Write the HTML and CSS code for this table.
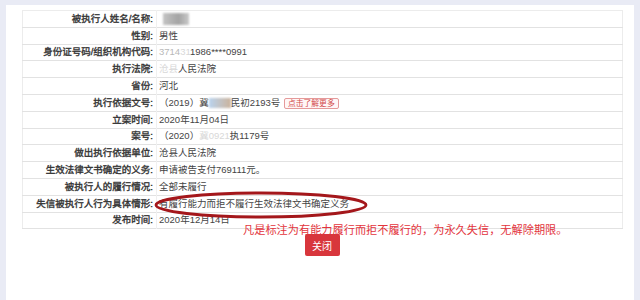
FILE: index.html
```html
<!DOCTYPE html>
<html lang="zh">
<head>
<meta charset="utf-8">
<link rel="stylesheet" href="styles.css">
</head>
<body>
<div class="panel">
  <table class="info">
    <tr><td class="label">被执行人姓名/名称:</td><td class="value"><span class="blur-name"></span></td></tr>
    <tr><td class="label">性别:</td><td class="value">男性</td></tr>
    <tr><td class="label">身份证号码/组织机构代码:</td><td class="value"><span class="faint">3714</span><span class="fainter">31</span>1986****0991</td></tr>
    <tr><td class="label">执行法院:</td><td class="value"><span class="fainter">沧县</span>人民法院</td></tr>
    <tr><td class="label">省份:</td><td class="value">河北</td></tr>
    <tr><td class="label">执行依据文号:</td><td class="value">（2019）冀<span class="blur-code"></span>民初2193号 <span class="tag">点击了解更多</span></td></tr>
    <tr><td class="label">立案时间:</td><td class="value">2020年11月04日</td></tr>
    <tr><td class="label">案号:</td><td class="value">（2020）<span class="fainter">冀0921</span>执1179号</td></tr>
    <tr><td class="label">做出执行依据单位:</td><td class="value">沧县人民法院</td></tr>
    <tr><td class="label">生效法律文书确定的义务:</td><td class="value">申请被告支付769111元。</td></tr>
    <tr><td class="label">被执行人的履行情况:</td><td class="value">全部未履行</td></tr>
    <tr><td class="label">失信被执行人行为具体情形:</td><td class="value">有履行能力而拒不履行生效法律文书确定义务</td></tr>
    <tr><td class="label">发布时间:</td><td class="value">2020年12月14日</td></tr>
  </table>
  <svg class="circle-mark" width="216" height="30" viewBox="0 0 216 30"><ellipse cx="108" cy="15" rx="105" ry="12" fill="none" stroke="#a4171b" stroke-width="2.8"/></svg>
  <p class="note">凡是标注为有能力履行而拒不履行的，为永久失信，无解除期限。</p>
  <div class="actions"><button class="btn-close">关闭</button></div>
</div>
</body>
</html>
```
FILE: styles.css
```css
html, body {
  margin: 0;
  padding: 0;
}
body {
  background: #e9ebf5;
  font-family: "Liberation Sans", "Noto Sans CJK SC", sans-serif;
  color: #333;
}
.panel {
  position: relative;
  margin: 5px 6px 0 6px;
  height: 295px;
  background: #fff;
  padding: 5px 12px 0 16px;
  box-sizing: border-box;
}
.info {
  width: 601px;
  border-collapse: collapse;
  border: 1px solid #ececec;
  font-size: 9.5px;
}
.info tr {
  height: 16.8px;
  border-bottom: 1px solid #e2e2e2;
}
.info td {
  padding: 0;
  line-height: 12px;
  vertical-align: middle;
  white-space: nowrap;
}
.label {
  width: 130px;
  text-align: right;
  font-weight: normal;
  -webkit-text-stroke: 0.35px #333;
  padding-right: 3px !important;
  border-right: 1px solid #f0f0f0;
  color: #333;
}
.value {
  padding-left: 2px !important;
  color: #444;
}
.faint { color: #b8b8b8; }
.fainter { color: #d8d8d8; }
.blur-name {
  display: inline-block;
  width: 26px;
  height: 12px;
  vertical-align: middle;
  margin-left: 4px;
  background: linear-gradient(90deg, #c4c4c4, #a4a4a4 60%, #c9c9c9);
  filter: blur(1px);
}
.blur-code {
  display: inline-block;
  width: 22px;
  height: 10px;
  vertical-align: middle;
  background: linear-gradient(90deg, #b9d3ee, #cbb39c);
  filter: blur(1.2px);
}
.tag {
  display: inline-block;
  font-size: 7.8px;
  line-height: 9px;
  padding: 0 3px;
  color: #d24b4b;
  border: 1px solid #e59a9a;
  border-radius: 2px;
  background: #fff6f6;
  vertical-align: middle;
  margin-left: 1px;
}
.circle-mark {
  position: absolute;
  left: 147px;
  top: 185px;
}
.note {
  margin: 0;
  padding: 0 0 0 221px;
  font-size: 11.2px;
  line-height: 14px;
  color: #e3343c;
  margin-top: -7px;
  font-family: "Noto Sans CJK SC", sans-serif;
}
.actions {
  display: flex;
  justify-content: center;
  margin-top: -2px;
}
.btn-close {
  width: 35px;
  height: 22px;
  border: 0;
  border-radius: 2px;
  background: #d8363c;
  color: #fff;
  font-family: "Noto Sans CJK SC", sans-serif;
  font-size: 10px;
  padding: 0;
}
```
